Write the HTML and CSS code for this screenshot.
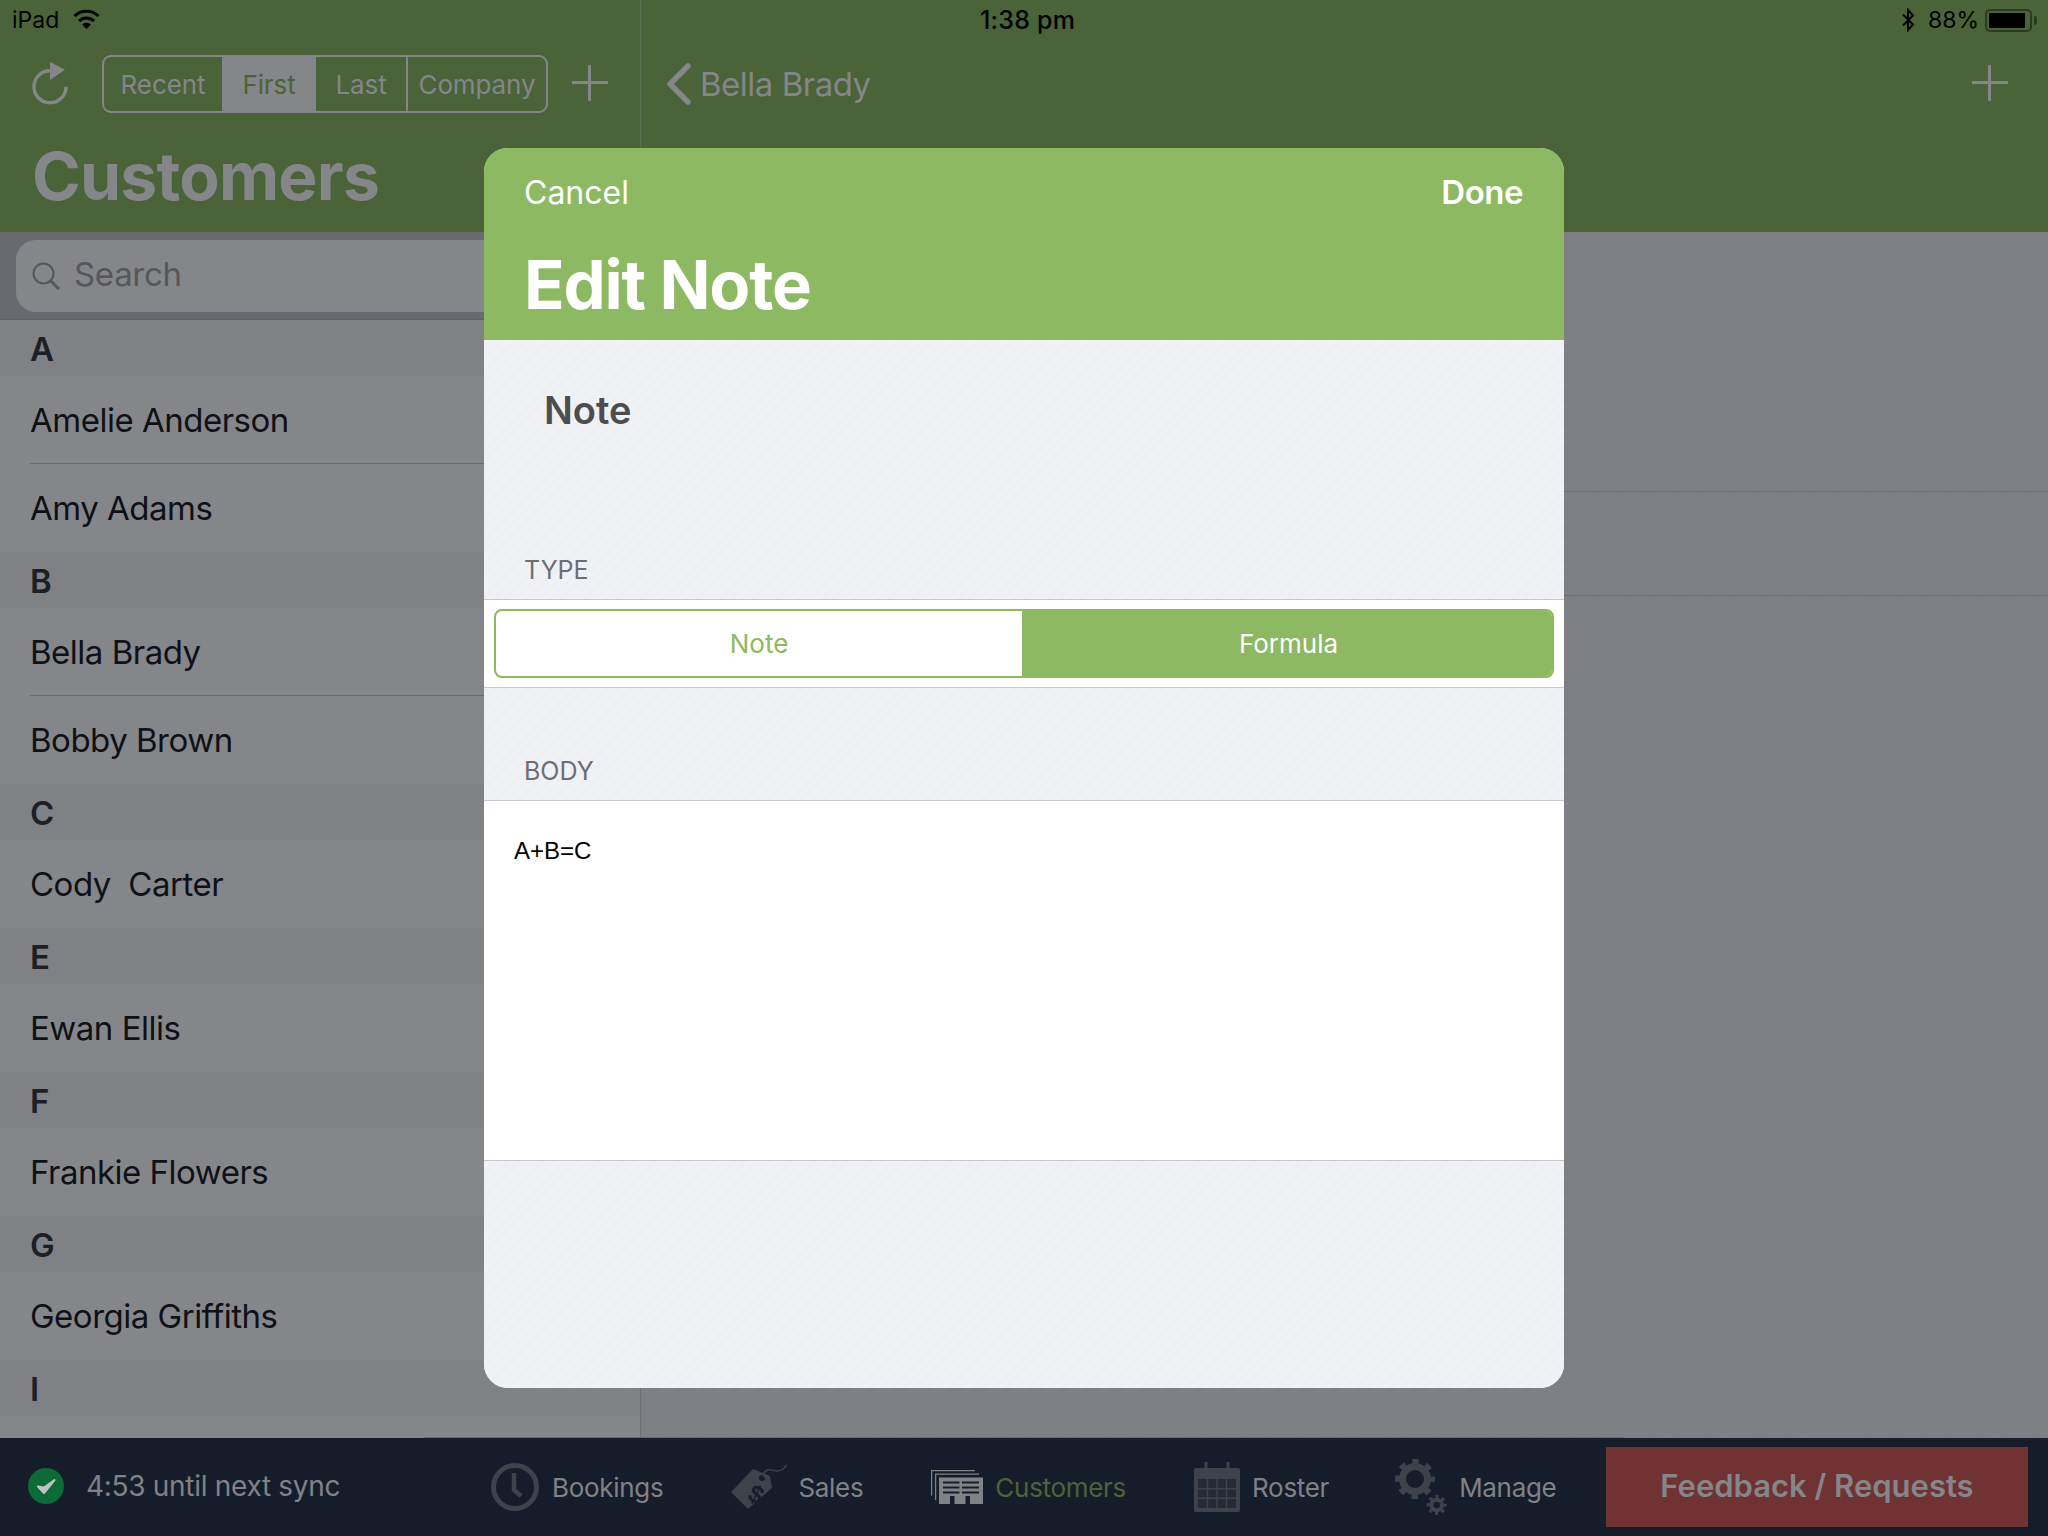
FILE: index.html
```html
<!DOCTYPE html>
<html lang="en">
<head>
<meta charset="utf-8">
<title>Edit Note</title>
<link rel="stylesheet" href="styles.css">
</head>
<body>
<div class="app">
  <header class="header">
    <div class="statusbar">
      <div class="status-left">
        <span>iPad</span>
        <svg class="wifi" viewBox="0 0 27 20"><path d="M9 15.500A7 7 0 0 1 18 15.500L13.500 20Z" fill="#000"/><path d="M1.500 7A17.500 17.500 0 0 1 25.500 7M6 12A11 11 0 0 1 21 12" fill="none" stroke="#000" stroke-width="3"/></svg>
      </div>
      <div class="status-time">1:38 pm</div>
      <div class="status-right">
        <svg class="bt" viewBox="0 0 14 24"><path d="M2 6.500 12 16.500 7 22V2l5 5.500L2 17.500" fill="none" stroke="#000" stroke-width="2"/></svg>
        <span>88%</span>
        <div class="battery"><div class="battery-fill"></div></div>
        <div class="battery-tip"></div>
      </div>
    </div>
    <div class="master-nav">
      <div class="tools">
        <svg class="refresh" viewBox="0 0 36 44"><path d="M18 8.700A16 16 0 1 0 34 24.700" fill="none" stroke="#85868a" stroke-width="3.500"/><path d="M18 0 33 7.700 18 18Z" fill="#85868a"/></svg>
        <div class="segments">
          <div class="seg seg-recent">Recent</div>
          <div class="seg seg-first">First</div>
          <div class="seg seg-last">Last</div>
          <div class="seg seg-company">Company</div>
        </div>
        <div class="plus plus-left"></div>
      </div>
      <h1 class="master-title">Customers</h1>
    </div>
    <div class="detail-nav">
      <svg class="chevron" viewBox="0 0 26 42"><path d="M23 3 5 21 23 39" fill="none" stroke="#85868a" stroke-width="5.500" stroke-linecap="round" stroke-linejoin="round"/></svg>
      <span class="back-label">Bella Brady</span>
      <div class="plus plus-right"></div>
    </div>
  </header>

  <main class="content">
    <section class="master">
      <div class="searchbar">
        <div class="searchfield">
          <svg class="magnifier" viewBox="0 0 28 28"><circle cx="11.500" cy="11.500" r="10" fill="none" stroke="#55575b" stroke-width="2"/><path d="M18.500 18.500 27 27" stroke="#55575b" stroke-width="3"/></svg>
          <span class="search-text">Search</span>
        </div>
      </div>
      <div class="list">
        <div class="list-section">A</div>
        <div class="list-row ruled">Amelie Anderson</div>
        <div class="list-row">Amy Adams</div>
        <div class="list-section">B</div>
        <div class="list-row ruled">Bella Brady</div>
        <div class="list-row">Bobby Brown</div>
        <div class="list-section">C</div>
        <div class="list-row">Cody&nbsp; Carter</div>
        <div class="list-section">E</div>
        <div class="list-row">Ewan Ellis</div>
        <div class="list-section">F</div>
        <div class="list-row">Frankie Flowers</div>
        <div class="list-section">G</div>
        <div class="list-row">Georgia Griffiths</div>
        <div class="list-section">I</div>
      </div>
    </section>
    <section class="detail">
      <div class="detail-row detail-row-a"></div>
      <div class="detail-row detail-row-b"></div>
    </section>
  </main>

  <footer class="tabbar">
    <div class="sync">
      <svg class="sync-icon" viewBox="0 0 36 36"><circle cx="18" cy="18" r="18" fill="#0c6b37"/><path d="M10 18.500 16 25 26.500 12 16 19.500Z" fill="#bfc4c4" stroke="#bfc4c4" stroke-width="2" stroke-linejoin="round"/></svg>
      <span>4:53 until next sync</span>
    </div>
    <nav class="tabs">
      <div class="tab tab-bookings">
        <svg class="tab-icon icon-clock" viewBox="0 0 48 48"><circle cx="24" cy="24" r="21.500" fill="none" stroke="#3e424a" stroke-width="5"/><path d="M23 10V27L30 33" fill="none" stroke="#3e424a" stroke-width="4.500"/></svg>
        <span>Bookings</span>
      </div>
      <div class="tab tab-sales">
        <svg class="tab-icon icon-tag" viewBox="0 0 56 46"><path fill-rule="evenodd" d="M0 28 22 5 39 12 41 24 17 45ZM31 11a3 3 0 1 0 .01 0Z" fill="#3e424a"/><path d="M32 13a3 3 0 0 0 1-4C37 3 41 7 46 7S53 5 55.500 1" fill="none" stroke="#3e424a" stroke-width="1.500"/><text class="tag-dollar" x="19" y="36" transform="rotate(25 19 27)">$</text></svg>
        <span>Sales</span>
      </div>
      <div class="tab tab-active">
        <svg class="tab-icon icon-building" viewBox="0 0 52 34"><path d="M44 .6H.6V25.500M48 4.200H4.600V30" fill="none" stroke="#808285" stroke-width="1.300"/><path fill-rule="evenodd" d="M8 7.500H52V34H39V26H34.500V34H23.500V26H19V34H8Z" fill="#808285"/><path d="M12 12.500H28.500M31 12.500H48M12 17.500H28.500M31 17.500H48M12 22.500H28.500M31 22.500H48" stroke="#161d2a" stroke-width="2.200"/></svg>
        <span>Customers</span>
      </div>
      <div class="tab tab-roster">
        <svg class="tab-icon icon-calendar" viewBox="0 0 46 50"><rect x="0" y="6" width="46" height="44" rx="2" fill="#3e424a"/><path d="M12 0V10M34 0V10" stroke="#3e424a" stroke-width="3"/><rect x="4" y="17" width="38" height="29" fill="#262a34"/><path d="M4 26.700H42M4 36.300H42M13.500 17V46M23 17V46M32.500 17V46" fill="none" stroke="#3e424a" stroke-width="1.500"/></svg>
        <span>Roster</span>
      </div>
      <div class="tab tab-manage">
        <svg class="tab-icon icon-gears" viewBox="0 0 53 56"><circle cx="21" cy="20" r="12.500" fill="none" stroke="#3e424a" stroke-width="7"/><circle cx="21" cy="20" r="17.500" fill="none" stroke="#3e424a" stroke-width="5" stroke-dasharray="6.500 7.244" stroke-dashoffset="3.250"/><circle cx="42.700" cy="46" r="5.300" fill="none" stroke="#3e424a" stroke-width="4"/><circle cx="42.700" cy="46" r="8.500" fill="none" stroke="#3e424a" stroke-width="3" stroke-dasharray="3.200 3.480" stroke-dashoffset="1.600"/></svg>
        <span>Manage</span>
      </div>
    </nav>
    <div class="feedback">Feedback / Requests</div>
  </footer>

  <div class="modal">
    <div class="modal-header">
      <div class="modal-actions">
        <span class="modal-cancel">Cancel</span>
        <span class="modal-done">Done</span>
      </div>
      <h2 class="modal-title">Edit Note</h2>
    </div>
    <div class="modal-body">
      <div class="note-name">Note</div>
      <div class="form-label form-label-type">TYPE</div>
      <div class="type-row">
        <div class="type-control">
          <div class="type-option type-note">Note</div>
          <div class="type-option type-formula">Formula</div>
        </div>
      </div>
      <div class="form-label form-label-body">BODY</div>
      <div class="body-field">A+B=C</div>
    </div>
  </div>
</div>
</body>
</html>
```

FILE: styles.css
```css
* { box-sizing: border-box; }
html, body { margin: 0; padding: 0; }
body { width: 2048px; height: 1536px; overflow: hidden; font-family: "Inter", "Liberation Sans", sans-serif; background: #7f8085; }
h1, h2 { margin: 0; }

.app { position: relative; width: 2048px; height: 1536px; display: flex; flex-direction: column; }

.header { position: relative; height: 232px; flex: none; display: flex; background: #4a6338; color: #85868a; }
.statusbar { position: absolute; top: 0; left: 0; right: 0; height: 40px; display: grid; grid-template-columns: 1fr auto 1fr; align-items: center; padding: 0 11px 0 12px; font-size: 23px; color: #000; }
.status-left { display: flex; align-items: center; gap: 14px; }
.wifi { width: 27px; height: 20px; margin-top: -2px; }
.status-time { font-size: 25px; font-weight: 500; letter-spacing: .2px; margin-left: 6px; }
.status-right { display: flex; align-items: center; justify-content: flex-end; }
.bt { width: 14px; height: 24px; margin-right: 13px; }
.battery { width: 47px; height: 23px; border: 2px solid #2b3a22; border-radius: 5px; padding: 2px; margin-left: 6px; }
.battery-fill { width: 36px; height: 100%; background: #000; }
.battery-tip { width: 3px; height: 9px; margin-left: 2px; background: #2b3a22; border-radius: 0 3px 3px 0; }

.master-nav { width: 641px; flex: none; border-right: 1px solid #5e6e52; padding-top: 55px; }
.tools { display: flex; align-items: flex-start; padding-left: 32px; }
.refresh { width: 36px; height: 44px; margin-top: 7px; }
.segments { margin-left: 34px; width: 446px; height: 58px; border: 2px solid #85868a; border-radius: 9px; display: grid; grid-template-columns: 118px 94px 90px 1fr; overflow: hidden; font-size: 26px; letter-spacing: -.1px; }
.seg { display: flex; align-items: center; justify-content: center; }
.seg-first { background: #85868a; color: #4a6338; }
.seg-company { border-left: 2px solid #85868a; }
.plus { position: relative; width: 36px; height: 36px; flex: none; }
.plus::before, .plus::after { content: ""; position: absolute; background: #85868a; }
.plus::before { left: 0; right: 0; top: 16px; height: 3px; }
.plus::after { top: 0; bottom: 0; left: 16px; width: 3px; }
.plus-left { margin: 10px 0 0 24px; }
.master-title { margin: 28px 0 0 32px; font-size: 66px; line-height: 70px; font-weight: 700; letter-spacing: -.8px; color: #85868a; }

.detail-nav { flex: 1; display: flex; align-items: flex-start; padding: 63px 40px 0 24px; }
.chevron { width: 26px; height: 42px; }
.back-label { margin-left: 9px; font-size: 33px; line-height: 42px; letter-spacing: -.5px; }
.plus-right { margin: 2px 0 0 auto; }

.content { flex: 1; display: flex; min-height: 0; }
.master { width: 641px; flex: none; border-right: 1px solid #6e6f74; background: #85868a; overflow: hidden; }
.searchbar { height: 88px; padding: 8px 16px 7px; background: #696a6f; border-bottom: 1px solid #5f6065; }
.searchfield { height: 72px; border-radius: 20px; background: #85868a; display: flex; align-items: center; padding-left: 16px; gap: 14px; color: #55575b; }
.search-text { font-size: 33px; letter-spacing: -.3px; margin-top: -4px; }
.magnifier { width: 28px; height: 28px; }
.list-section { height: 56px; padding-left: 30px; background: #808185; color: #1c1f26; font-size: 33px; font-weight: 600; line-height: 58px; }
.list-row { position: relative; height: 88px; padding-left: 30px; font-size: 33px; letter-spacing: -.5px; line-height: 89px; color: #0f1116; background: #85868a; }
.list-row.ruled::after { content: ""; position: absolute; left: 30px; right: 0; bottom: 0; height: 1px; background: #6a6b70; }

.detail { flex: 1; background: repeating-linear-gradient(135deg, #7f8085 0 4px, #7e7f84 4px 8px); }
.detail-row { border-bottom: 1px solid #6e6f74; }
.detail-row-a { height: 260px; }
.detail-row-b { height: 104px; }

.tabbar { position: relative; height: 98px; flex: none; display: flex; align-items: center; background: #161d2a; padding: 0 20px 0 28px; color: #808285; }
.tabbar::before { content: ""; position: absolute; top: -1px; left: 424px; width: 1200px; height: 1px; background: #6a6b70; }
.sync { width: 463px; flex: none; display: flex; align-items: center; gap: 22px; font-size: 28px; letter-spacing: -.3px; margin-top: -2px; }
.sync-icon { width: 36px; height: 36px; }
.tabs { display: flex; align-items: center; gap: 68px; font-size: 26px; letter-spacing: -.3px; }
.tab { display: flex; align-items: center; gap: 14px; }
.tab-bookings { gap: 13px; }
.tab-sales { gap: 11px; }
.tab-active { color: #4c6339; gap: 12px; }
.tab-roster { gap: 12px; }
.tab-manage { gap: 12px; margin-left: -3px; }
.tab-icon { flex: none; }
.icon-clock { width: 48px; height: 48px; }
.icon-tag { width: 56px; height: 46px; }
.tag-dollar { font-family: "Liberation Sans", sans-serif; font-size: 25px; font-weight: 700; fill: #161d2a; }
.icon-building { width: 52px; height: 34px; }
.icon-calendar { width: 46px; height: 50px; }
.icon-gears { width: 53px; height: 56px; }
.feedback { margin-left: auto; width: 422px; height: 80px; background: #703232; color: #85868a; display: flex; align-items: center; justify-content: center; font-size: 31px; font-weight: 600; padding-bottom: 3px; }

.modal { position: absolute; left: 484px; top: 148px; width: 1080px; height: 1240px; border-radius: 24px; overflow: hidden; display: flex; flex-direction: column; background: #f0f1f5; }
.modal-header { height: 192px; flex: none; padding: 24px 41px 0 40px; background: #8db963; color: #fff; }
.modal-actions { display: flex; justify-content: space-between; align-items: center; height: 40px; }
.modal-cancel { font-size: 32px; }
.modal-done { font-size: 33px; font-weight: 600; letter-spacing: -.5px; }
.modal-title { margin-top: 37px; font-size: 67px; line-height: 72px; font-weight: 700; letter-spacing: -1.200px; }
.modal-body { flex: 1; display: flex; flex-direction: column; background: repeating-linear-gradient(135deg, #f1f2f6 0 4px, #eef0f4 4px 8px); }
.note-name { height: 110px; padding: 47px 0 0 60px; font-size: 38px; line-height: 46px; font-weight: 600; color: #4d4d4f; }
.form-label { padding-left: 40px; padding-bottom: 14px; font-size: 25px; line-height: 30px; color: #6d6d72; display: flex; align-items: flex-end; }
.form-label-type { height: 149px; }
.form-label-body { height: 112px; }
.type-row { height: 89px; flex: none; padding: 9px 10px; background: #fff; border-top: 1px solid #c8c8cf; border-bottom: 1px solid #c8c8cf; }
.type-control { height: 69px; display: grid; grid-template-columns: 526px 1fr; border: 2px solid #8db963; border-radius: 8px; overflow: hidden; font-size: 26px; }
.type-option { display: flex; align-items: center; justify-content: center; }
.type-note { color: #8db963; }
.type-formula { background: #8db963; color: #fff; padding-left: 3px; }
.body-field { height: 361px; flex: none; padding: 35px 0 0 30px; background: #fff; border-top: 1px solid #c8c8cf; border-bottom: 1px solid #c8c8cf; font-family: "Liberation Sans", sans-serif; font-size: 24px; line-height: 30px; color: #000; }
```
